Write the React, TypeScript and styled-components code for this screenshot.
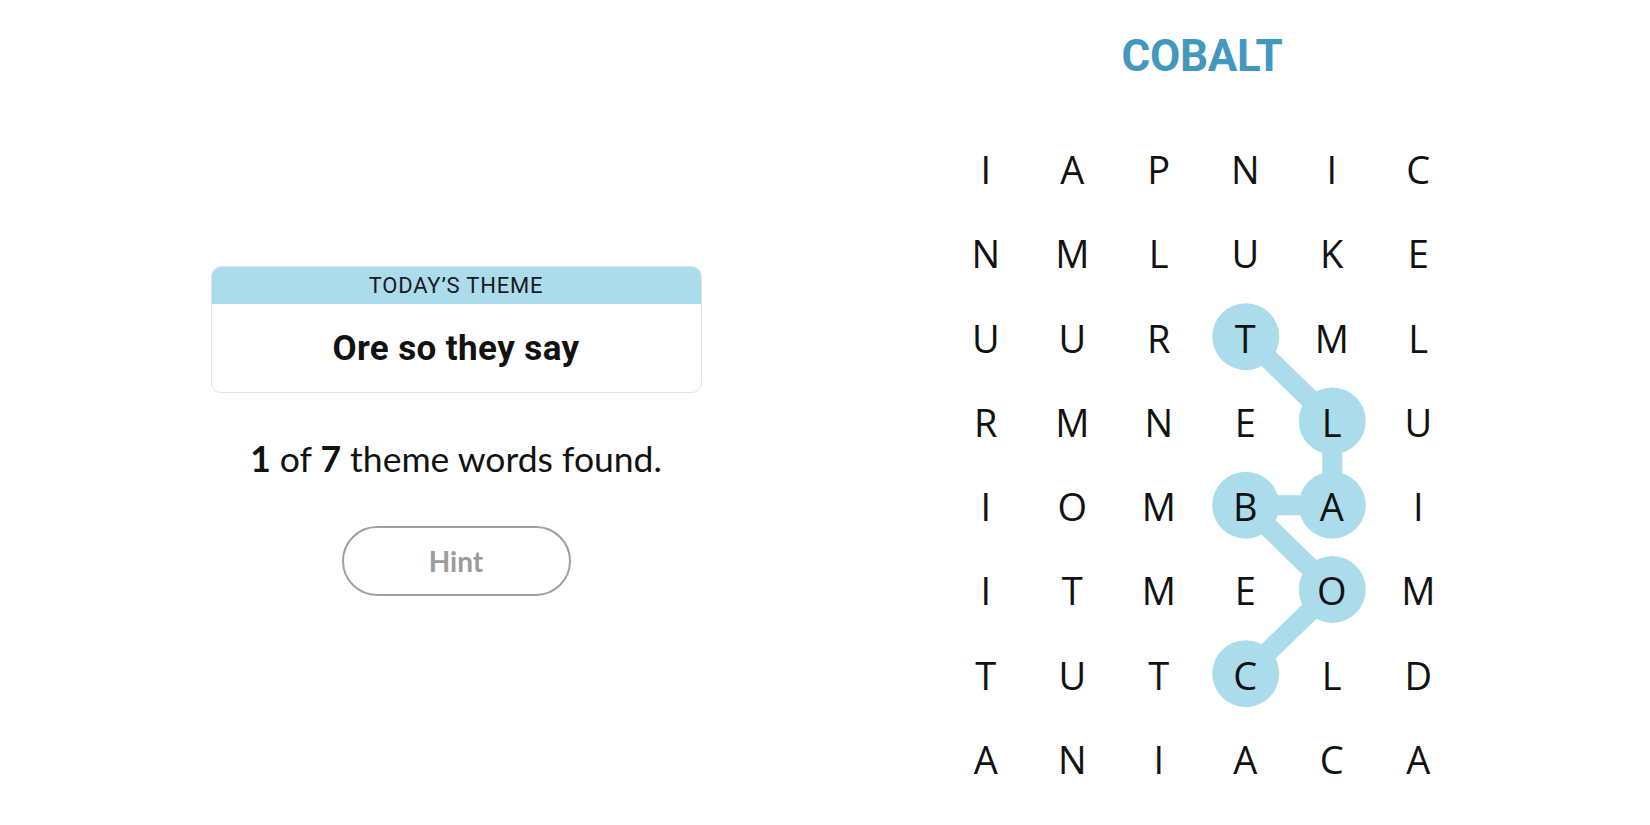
import React from "react";
import styled, { createGlobalStyle } from "styled-components";

const GlobalStyle = createGlobalStyle`
  html, body { margin: 0; padding: 0; background: #ffffff; }
  body { font-family: "Open Sans", "Liberation Sans", sans-serif; color: #121212; }
`;

const CELL_W = 86.5;
const CELL_H = 84.25;
const COLS = 6;
const ROWS = 8;

const LETTERS = [
  "IAPNIC",
  "NMLUKE",
  "UURTML",
  "RMNELU",
  "IOMBAI",
  "ITMEOM",
  "TUTCLD",
  "ANIACA",
];

// Path of the found word COBALT as [row, col]
const PATH: [number, number][] = [
  [6, 3],
  [5, 4],
  [4, 3],
  [4, 4],
  [3, 4],
  [2, 3],
];

const Page = styled.div`
  display: flex;
  flex-direction: row;
  height: 825px;
  width: 1650px;
  overflow: hidden;
`;

const LeftPanel = styled.section`
  width: 912px;
  display: flex;
  flex-direction: column;
  align-items: center;
  padding-top: 266px;
  box-sizing: border-box;
`;

const ThemeCard = styled.div`
  width: 491px;
  border: 1px solid #e4e4e4;
  border-radius: 10px;
  overflow: hidden;
  box-sizing: border-box;
  background: #ffffff;
`;

const CardHeader = styled.div`
  height: 37px;
  background: #aadcec;
  display: flex;
  align-items: center;
  justify-content: center;
  font-family: Roboto, "Liberation Sans", sans-serif;
  font-size: 22px;
  letter-spacing: 0.8px;
  color: #1a1a1a;
  text-transform: uppercase;
`;

const CardBody = styled.div`
  height: 88px;
  display: flex;
  align-items: center;
  justify-content: center;
  font-family: Roboto, "Liberation Sans", sans-serif;
  font-weight: 700;
  font-size: 35px;
  letter-spacing: 0.4px;
  color: #121212;
`;

const Stats = styled.p`
  margin: 46px 0 0;
  line-height: 40px;
  font-family: Lato, "Liberation Sans", sans-serif;
  font-size: 35.5px;
  color: #121212;
  b { font-weight: 700; }
`;

const HintButton = styled.button`
  margin-top: 47px;
  width: 229px;
  height: 70px;
  border: 2px solid #a0a0a0;
  border-radius: 35px;
  background: #ffffff;
  font-family: Lato, "Liberation Sans", sans-serif;
  font-weight: 700;
  font-size: 28px;
  color: #9c9c9c;
  cursor: pointer;
`;

const RightPanel = styled.section`
  width: 520px;
  margin-left: 30px;
  display: flex;
  flex-direction: column;
  align-items: center;
`;

const Title = styled.h1`
  margin: 30px 0 0;
  line-height: 52px;
  font-family: Roboto, "Liberation Sans", sans-serif;
  font-weight: 700;
  font-size: 44px;
  color: #4399bd;
  letter-spacing: -0.3px;
`;

const Board = styled.div`
  position: relative;
  margin-top: 44px;
  width: ${CELL_W * COLS}px;
  height: ${CELL_H * ROWS}px;
`;

const Overlay = styled.svg`
  position: absolute;
  left: 0;
  top: 0;
  width: 100%;
  height: 100%;
`;

const LetterGrid = styled.div`
  position: relative;
  display: grid;
  grid-template-columns: repeat(${COLS}, ${CELL_W}px);
  grid-template-rows: repeat(${ROWS}, ${CELL_H}px);
`;

const Cell = styled.div`
  display: flex;
  align-items: center;
  justify-content: center;
  font-family: "Open Sans", "Liberation Sans", sans-serif;
  font-size: 38px;
  font-weight: 400;
  line-height: 1;
  color: #121212;
  padding-top: 2px;
`;

const cx = (c: number) => c * CELL_W + CELL_W / 2;
const cy = (r: number) => r * CELL_H + CELL_H / 2;

export default function App() {
  return (
    <>
      <GlobalStyle />
      <Page>
        <LeftPanel>
          <ThemeCard>
            <CardHeader>Today’s theme</CardHeader>
            <CardBody>Ore so they say</CardBody>
          </ThemeCard>
          <Stats>
            <b>1</b> of <b>7</b> theme words found.
          </Stats>
          <HintButton type="button">Hint</HintButton>
        </LeftPanel>
        <RightPanel>
          <Title>COBALT</Title>
          <Board>
            <Overlay viewBox={`0 0 ${CELL_W * COLS} ${CELL_H * ROWS}`}>
              {PATH.slice(1).map(([r, c], i) => {
                const [pr, pc] = PATH[i];
                return (
                  <line
                    key={`l${i}`}
                    x1={cx(pc)}
                    y1={cy(pr)}
                    x2={cx(c)}
                    y2={cy(r)}
                    stroke="#aadcec"
                    strokeWidth={20}
                    strokeLinecap="round"
                  />
                );
              })}
              {PATH.map(([r, c], i) => (
                <circle key={`c${i}`} cx={cx(c)} cy={cy(r)} r={33.5} fill="#aadcec" />
              ))}
            </Overlay>
            <LetterGrid>
              {LETTERS.flatMap((row, r) =>
                row.split("").map((ch, c) => <Cell key={`${r}-${c}`}>{ch}</Cell>)
              )}
            </LetterGrid>
          </Board>
        </RightPanel>
      </Page>
    </>
  );
}
